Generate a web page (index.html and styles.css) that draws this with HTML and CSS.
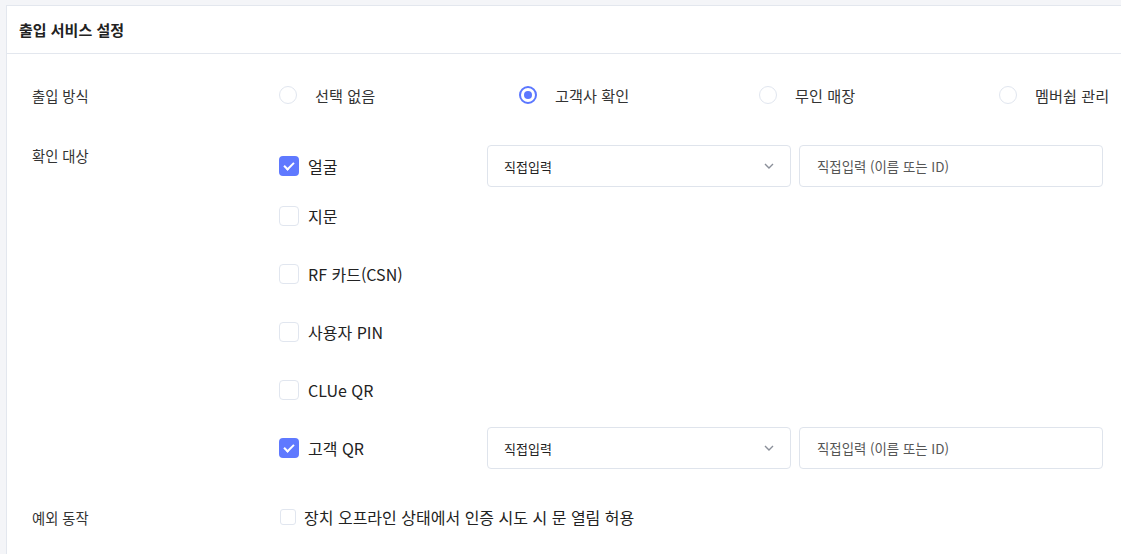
FILE: index.html
```html
<!DOCTYPE html>
<html lang="ko">
<head>
  <meta charset="UTF-8" />
  <title>출입 서비스 설정</title>
  <link rel="stylesheet" href="styles.css">
</head>
<body>

<div class="panel">
  <div class="panel-head">출입 서비스 설정</div>

  <div class="panel-body">
    <div class="form-row">
      <div class="form-label">출입 방식</div>
      <div class="radio-group">
        <label class="radio"><span class="radio-mark"></span>선택 없음</label>
        <label class="radio"><span class="radio-mark on"></span>고객사 확인</label>
        <label class="radio"><span class="radio-mark"></span>무인 매장</label>
        <label class="radio"><span class="radio-mark"></span>멤버쉽 관리</label>
      </div>
    </div>

    <div class="form-row targets">
      <div class="form-label top">확인 대상</div>
      <div class="check-list">
        <div class="check-row first">
          <label class="check"><span class="check-mark on"></span>얼굴</label>
          <div class="select">직접입력
            <svg class="chevron" width="10" height="6" viewBox="0 0 10 6"><path d="M1 1l4 4 4-4" fill="none" stroke="#8a8f99" stroke-width="1.4"/></svg>
          </div>
          <div class="text-input">직접입력 (이름 또는 ID)</div>
        </div>
        <div class="check-row">
          <label class="check"><span class="check-mark"></span>지문</label>
        </div>
        <div class="check-row">
          <label class="check"><span class="check-mark"></span>RF 카드(CSN)</label>
        </div>
        <div class="check-row">
          <label class="check"><span class="check-mark"></span>사용자 PIN</label>
        </div>
        <div class="check-row">
          <label class="check"><span class="check-mark"></span>CLUe QR</label>
        </div>
        <div class="check-row">
          <label class="check"><span class="check-mark on"></span>고객 QR</label>
          <div class="select">직접입력
            <svg class="chevron" width="10" height="6" viewBox="0 0 10 6"><path d="M1 1l4 4 4-4" fill="none" stroke="#8a8f99" stroke-width="1.4"/></svg>
          </div>
          <div class="text-input">직접입력 (이름 또는 ID)</div>
        </div>
      </div>
    </div>

    <div class="form-row exception">
      <div class="form-label">예외 동작</div>
      <label class="check small"><span class="check-mark"></span>장치 오프라인 상태에서 인증 시도 시 문 열림 허용</label>
    </div>
  </div>
</div>

</body>
</html>
```

FILE: styles.css
```css
body {
  margin: 0;
  background: #f4f5f8;
  font-family: "Noto Sans CJK KR", "Noto Sans", sans-serif;
  color: #333;
  overflow: hidden;
}
.panel {
  margin: 5px 0 0 6px;
  width: 1200px;
  background: #fff;
  border: 1px solid #e3e7ee;
}
.panel-head {
  height: 47px;
  display: flex;
  align-items: center;
  padding-left: 12px;
  font-size: 15px;
  font-weight: bold;
  color: #222;
  border-bottom: 1px solid #e3e7ee;
}
.panel-body {
  padding: 20px 0 40px 25px;
  display: flex;
  flex-direction: column;
  gap: 28px;
}
.form-row {
  display: grid;
  grid-template-columns: 246px 1fr;
  align-items: center;
  min-height: 42px;
}
.form-row.targets {
  margin-top: 1px;
}
.form-row.exception {
  margin-top: -1px;
}
.form-label {
  font-size: 14.3px;
  color: #333;
}
.form-label.top {
  align-self: start;
  line-height: 22px;
}
.radio-group {
  display: flex;
}
.radio {
  width: 240px;
  display: flex;
  align-items: center;
  gap: 18px;
  font-size: 15.2px;
  color: #333;
}
.radio-mark {
  width: 18px;
  height: 18px;
  margin-left: 1px;
  box-sizing: border-box;
  border: 1.5px solid #e1e6ef;
  border-radius: 50%;
  position: relative;
}
.radio-mark.on {
  border: 2px solid #5b77ff;
}
.radio-mark.on::after {
  content: "";
  position: absolute;
  top: 3px;
  left: 3px;
  width: 8px;
  height: 8px;
  border-radius: 50%;
  background: #5b77ff;
}
.check-list {
  display: flex;
  flex-direction: column;
  gap: 16px;
}
.check-row {
  display: flex;
  align-items: center;
  height: 42px;
}
.check-row.first {
  margin-bottom: -8px;
}
.check {
  width: 209px;
  display: flex;
  align-items: center;
  gap: 9px;
  font-size: 16px;
  color: #222;
}
.check-mark {
  width: 20px;
  height: 20px;
  margin-left: 1px;
  box-sizing: border-box;
  border: 1.5px solid #e1e6ef;
  border-radius: 4px;
  position: relative;
}
.check-mark.on {
  border: none;
  background: #5f79ff;
}
.check-mark.on::after {
  content: "";
  position: absolute;
  left: 7px;
  top: 4px;
  width: 4px;
  height: 8px;
  border: solid #fff;
  border-width: 0 2.5px 2.5px 0;
  transform: rotate(45deg);
}
.check.small {
  width: auto;
  gap: 8px;
  font-size: 16px;
}
.check.small .check-mark {
  width: 16px;
  height: 16px;
  margin-left: 2px;
  border-radius: 3px;
}
.select, .text-input {
  width: 304px;
  height: 42px;
  box-sizing: border-box;
  border: 1px solid #dfe4ec;
  border-radius: 4px;
  display: flex;
  align-items: center;
  font-size: 13px;
}
.select {
  padding: 0 16px;
  justify-content: space-between;
  color: #222;
  margin-right: 8px;
}
.text-input {
  padding-left: 17px;
  font-size: 13.4px;
  color: #555;
}
```
